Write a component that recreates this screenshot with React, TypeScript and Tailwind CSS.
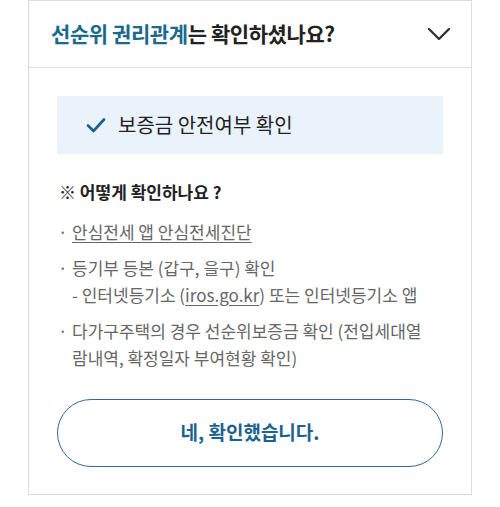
export default function App() {
  return (
    <div className="min-h-[507px] w-[500px] bg-white pt-px font-['Noto_Sans_CJK_KR','Noto_Sans',sans-serif]">
      <div className="mx-[28px] -mt-px border border-[#dddddd] bg-white">
        <div className="flex h-[67px] items-center justify-between border-b border-[#dddddd] pl-[22px] pr-[20px]">
          <h2 className="text-[21px] font-bold tracking-[-0.02em] text-[#222222]">
            <span className="text-[#1a6a8c]">선순위 권리관계</span>는 확인하셨나요?
          </h2>
          <svg width="24" height="14" viewBox="0 0 24 14" fill="none" aria-hidden>
            <path d="M2 2l10 10L22 2" stroke="#333333" strokeWidth="2.4" strokeLinecap="round" strokeLinejoin="round" />
          </svg>
        </div>

        <div className="px-[28px] pb-[27px] pt-[28px]">
          <div className="flex h-[58px] items-center gap-[12px] bg-[#eaf2fc] pl-[29px]">
            <svg width="20" height="16" viewBox="0 0 20 16" fill="none" aria-hidden>
              <path d="M2 8.5l5.5 5.5L18 2.5" stroke="#1d5f8f" strokeWidth="2.6" strokeLinecap="round" strokeLinejoin="round" />
            </svg>
            <span className="text-[20px] text-[#222222]">보증금 안전여부 확인</span>
          </div>

          <p className="mt-[25px] pl-[2px] text-[17px] font-bold text-[#222222]">※ 어떻게 확인하나요 ?</p>

          <ul className="mt-[13px] flex flex-col gap-[9px] text-[17px] leading-[27px] text-[#666666]">
            <li className="flex">
              <span className="w-[15px] shrink-0 pl-[1px]">·</span>
              <span className="underline underline-offset-[3px]">안심전세 앱 안심전세진단</span>
            </li>
            <li className="flex">
              <span className="w-[15px] shrink-0 pl-[1px]">·</span>
              <span>
                등기부 등본 (갑구, 을구) 확인
                <br />- 인터넷등기소 (<span className="underline underline-offset-[3px]">iros.go.kr</span>) 또는 인터넷등기소 앱
              </span>
            </li>
            <li className="flex">
              <span className="w-[15px] shrink-0 pl-[1px]">·</span>
              <span className="whitespace-nowrap">
                다가구주택의 경우 선순위보증금 확인 (전입세대열
                <br />
                람내역, 확정일자 부여현황 확인)
              </span>
            </li>
          </ul>

          <button
            type="button"
            className="mt-[28px] flex h-[68px] w-full items-center justify-center rounded-full border-[1.5px] border-[#2c6a94] text-[19px] font-bold text-[#1c628f]"
          >
            네, 확인했습니다.
          </button>
        </div>
      </div>
    </div>
  );
}
